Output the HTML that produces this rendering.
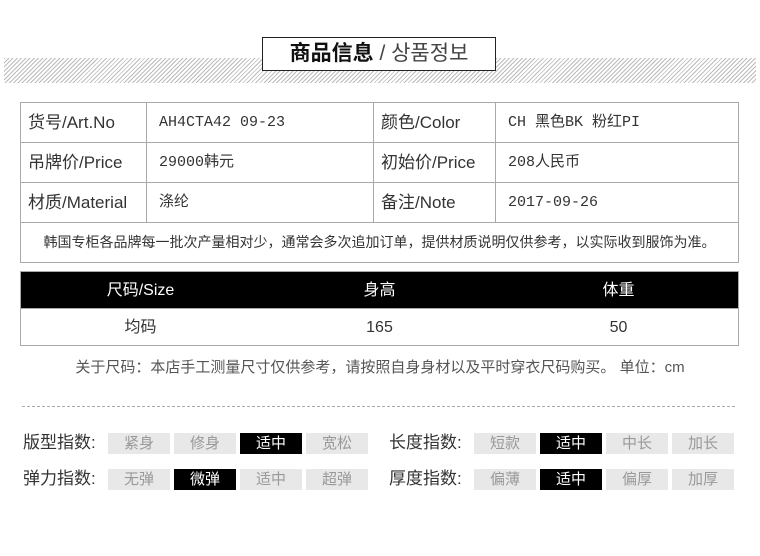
<!DOCTYPE html>
<html><head><meta charset="utf-8"><style>
body{margin:0;width:760px;height:556px;background:#fff;position:relative;font-family:"Liberation Sans","Noto Sans CJK SC",sans-serif;color:#333;overflow:hidden}
.a{position:absolute}
.hatch{left:4px;top:58px;width:752px;height:25px;background:repeating-linear-gradient(135deg,#bbb 0 1px,#fff 1px 3px)}
.title{left:262px;top:37px;width:232px;height:32px;border:1px solid #222;background:#fff;text-align:center;font-size:21px;line-height:32px;color:#111}
table{border-collapse:collapse;position:absolute}
.info td{border:1px solid #aaa;height:39px;font-size:17px;line-height:17px;padding:0 0 0 7px;color:#333;overflow:hidden}
.info td.m{font-family:"Liberation Mono","Noto Sans CJK SC",monospace;font-size:15px;padding-left:12px}
.size td{text-align:center;font-size:16px;line-height:18px;padding:2px 0 0 0}
.btn{position:absolute;width:62px;height:21px;background:#e8e8e8;color:#999;font-size:15px;text-align:center;line-height:21px}
.on{background:#000;color:#fff}
.lab{position:absolute;font-size:17px;line-height:20px;color:#333}
</style></head><body>
<div class="a hatch"></div>
<div class="a title"><b>商品信息</b> <span style="color:#444">/ 상품정보</span></div>
<table class="info" style="left:20px;top:102px;width:719px">
<tr><td style="width:118px">货号/Art.No</td><td class="m" style="width:214px">AH4CTA42 09-23</td><td style="width:114px">颜色/Color</td><td class="m">CH 黑色BK 粉红PI</td></tr>
<tr><td>吊牌价/Price</td><td class="m">29000韩元</td><td>初始价/Price</td><td class="m">208人民币</td></tr>
<tr><td>材质/Material</td><td class="m">涤纶</td><td>备注/Note</td><td class="m">2017-09-26</td></tr>
<tr><td colspan="4" style="text-align:center;font-size:14px;padding:0">韩国专柜各品牌每一批次产量相对少，通常会多次追加订单，提供材质说明仅供参考，以实际收到服饰为准。</td></tr>
</table>
<div class="a" style="left:20px;top:271px;width:717px;height:73px;border:1px solid #aaa"></div>
<table class="size" style="left:21px;top:272px;width:717px">
<tr style="background:#000;color:#fff;height:36px"><td style="width:239px">尺码/Size</td><td style="width:239px">身高</td><td>体重</td></tr>
<tr style="height:37px;border-top:1px solid #aaa"><td>均码</td><td>165</td><td>50</td></tr>
</table>
<div class="a" style="left:0;width:760px;top:356px;text-align:center;font-size:15px;color:#555">关于尺码：本店手工测量尺寸仅供参考，请按照自身身材以及平时穿衣尺码购买。 单位：cm</div>
<div class="a" style="left:22px;top:406px;width:713px;border-top:1px dashed #aaa"></div>
<div class="lab" style="left:23px;top:433px">版型指数:</div>
<div class="btn" style="left:108px;top:433px">紧身</div><div class="btn" style="left:174px;top:433px">修身</div><div class="btn on" style="left:240px;top:433px">适中</div><div class="btn" style="left:306px;top:433px">宽松</div>
<div class="lab" style="left:23px;top:469px">弹力指数:</div>
<div class="btn" style="left:108px;top:469px">无弹</div><div class="btn on" style="left:174px;top:469px">微弹</div><div class="btn" style="left:240px;top:469px">适中</div><div class="btn" style="left:306px;top:469px">超弹</div>
<div class="lab" style="left:389px;top:433px">长度指数:</div>
<div class="btn" style="left:474px;top:433px">短款</div><div class="btn on" style="left:540px;top:433px">适中</div><div class="btn" style="left:606px;top:433px">中长</div><div class="btn" style="left:672px;top:433px">加长</div>
<div class="lab" style="left:389px;top:469px">厚度指数:</div>
<div class="btn" style="left:474px;top:469px">偏薄</div><div class="btn on" style="left:540px;top:469px">适中</div><div class="btn" style="left:606px;top:469px">偏厚</div><div class="btn" style="left:672px;top:469px">加厚</div>
</body></html>
